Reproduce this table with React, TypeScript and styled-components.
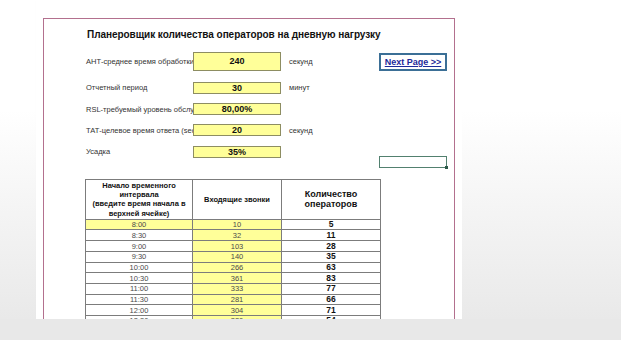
import React from "react";
import styled, { createGlobalStyle } from "styled-components";

const Global = createGlobalStyle`
  html, body { margin: 0; padding: 0; background: #fff; }
  body { font-family: "Liberation Sans", Arial, sans-serif; }
`;

const Page = styled.div`
  width: 621px;
  height: 340px;
  display: flex;
  flex-direction: column;
  overflow: hidden;
`;

const Stage = styled.div`
  display: flex;
  height: 319px;
`;

const Gutter = styled.div<{ $w?: number }>`
  ${(p) => (p.$w ? `width: ${p.$w}px;` : "flex: 1;")}
  background: linear-gradient(to bottom, #ffffff 0px, #ffffff 110px, #e9e9e9 319px);
`;

const BottomBar = styled.div`
  flex: 1;
  background: #e8e8e8;
`;

const Sheet = styled.div`
  width: 426px;
  background: #fff;
  display: flex;
  flex-direction: column;
  box-shadow: 1px 0 2px rgba(0, 0, 0, 0.06);
`;

const Frame = styled.div`
  margin: 18px 7px 0;
  flex: 1;
  border: 1px solid #b3708e;
  border-bottom: none;
  padding: 9px 0 0 41px;
  overflow: hidden;
  display: flex;
  flex-direction: column;
`;

const Title = styled.h1`
  margin: 0 0 0 2px;
  font-size: 10px;
  line-height: 13px;
  font-weight: bold;
  color: #111;
  letter-spacing: -0.05px;
`;

const Params = styled.div`
  display: flex;
  flex-direction: column;
  margin-top: 10.7px;
`;

const ParamRow = styled.div<{ $h: number; $mt?: number }>`
  display: grid;
  grid-template-columns: 108px 88px 98px 68px;
  height: ${(p) => p.$h}px;
  margin-top: ${(p) => p.$mt ?? 0}px;
`;

const Label = styled.div`
  display: flex;
  align-items: center;
  padding-left: 1px;
  font-size: 7.5px;
  color: #333;
  white-space: nowrap;
  overflow: hidden;
`;

const InputBox = styled.div`
  display: flex;
  align-items: center;
  justify-content: center;
  background: #ffff99;
  border: 1px solid #8d8d62;
  font-size: 9px;
  font-weight: bold;
  color: #111;
`;

const Unit = styled.div`
  display: flex;
  align-items: center;
  padding-left: 8px;
  font-size: 7.5px;
  color: #333;
`;

const NextButton = styled.div`
  display: flex;
  align-items: center;
  justify-content: center;
  border: 2px solid #3b6f96;
  margin-top: 1px;
`;

const NextLink = styled.a`
  font-size: 9px;
  font-weight: bold;
  color: #1d2a9a;
  text-decoration: underline;
`;

const SelectedCell = styled.div`
  position: relative;
  border: 1.5px solid #52806f;
  &::after {
    content: "";
    position: absolute;
    right: -2px;
    bottom: -2px;
    width: 3px;
    height: 3px;
    background: #2d5a4a;
  }
`;

const Empty = styled.div``;

const Table = styled.table`
  margin-top: 11px;
  border-collapse: collapse;
  table-layout: fixed;
  width: 296px;
`;

const HeadCell = styled.th<{ $size: number; $lh: number }>`
  height: 39px;
  padding: 0;
  border: 1px solid #7c7c7c;
  font-size: ${(p) => p.$size}px;
  line-height: ${(p) => p.$lh}px;
  font-weight: bold;
  color: #111;
  text-align: center;
  vertical-align: middle;
  white-space: nowrap;
`;

const Cell = styled.td<{ $yellow?: boolean; $bold?: boolean }>`
  height: 9.7px;
  padding: 0;
  border: 1px solid #7c7c7c;
  background: ${(p) => (p.$yellow ? "#ffff99" : "#fff")};
  font-size: ${(p) => (p.$bold ? 8.5 : 7.5)}px;
  line-height: 9px;
  font-weight: ${(p) => (p.$bold ? "bold" : "normal")};
  color: ${(p) => (p.$bold ? "#111" : "#4a4a4a")};
  text-align: center;
  white-space: nowrap;
  overflow: hidden;
`;

const rows: [string, string, string][] = [
  ["8:00", "10", "5"],
  ["8:30", "32", "11"],
  ["9:00", "103", "28"],
  ["9:30", "140", "35"],
  ["10:00", "266", "63"],
  ["10:30", "361", "83"],
  ["11:00", "333", "77"],
  ["11:30", "281", "66"],
  ["12:00", "304", "71"],
  ["12:30", "320", "54"],
];

export default function App() {
  return (
    <Page>
      <Global />
      <Stage>
        <Gutter $w={36} />
        <Sheet>
          <Frame>
            <Title>Планеровщик количества операторов на дневную нагрузку</Title>
            <Params>
              <ParamRow $h={19.3}>
                <Label>АНТ-среднее время обработки</Label>
                <InputBox>240</InputBox>
                <Unit>секунд</Unit>
                <NextButton>
                  <NextLink>Next Page &gt;&gt;</NextLink>
                </NextButton>
              </ParamRow>
              <ParamRow $h={10.7} $mt={10.7}>
                <Label>Отчетный период</Label>
                <InputBox>30</InputBox>
                <Unit>минут</Unit>
                <Empty />
              </ParamRow>
              <ParamRow $h={10.7} $mt={10.7}>
                <Label>RSL-требуемый уровень обслуживания</Label>
                <InputBox>80,00%</InputBox>
                <Unit />
                <Empty />
              </ParamRow>
              <ParamRow $h={10.7} $mt={10.7}>
                <Label>ТАТ-целевое время ответа (sec)</Label>
                <InputBox>20</InputBox>
                <Unit>секунд</Unit>
                <Empty />
              </ParamRow>
              <ParamRow $h={10.7} $mt={10.7}>
                <Label>Усадка</Label>
                <InputBox>35%</InputBox>
                <Unit />
                <Empty />
              </ParamRow>
              <ParamRow $h={11.3}>
                <Empty />
                <Empty />
                <Empty />
                <SelectedCell />
              </ParamRow>
            </Params>
            <Table>
              <colgroup>
                <col style={{ width: 107 }} />
                <col style={{ width: 89 }} />
                <col style={{ width: 99 }} />
              </colgroup>
              <thead>
                <tr>
                  <HeadCell $size={7.5} $lh={9.3}>
                    Начало временного
                    <br />
                    интервала
                    <br />
                    (введите время начала в
                    <br />
                    верхней ячейке)
                  </HeadCell>
                  <HeadCell $size={7.5} $lh={9.3}>
                    Входящие звонки
                  </HeadCell>
                  <HeadCell $size={9} $lh={10.7}>
                    Количество
                    <br />
                    операторов
                  </HeadCell>
                </tr>
              </thead>
              <tbody>
                {rows.map(([t, calls, ops], i) => (
                  <tr key={t}>
                    <Cell $yellow={i === 0}>{t}</Cell>
                    <Cell $yellow>{calls}</Cell>
                    <Cell $bold>{ops}</Cell>
                  </tr>
                ))}
              </tbody>
            </Table>
          </Frame>
        </Sheet>
        <Gutter />
      </Stage>
      <BottomBar />
    </Page>
  );
}
